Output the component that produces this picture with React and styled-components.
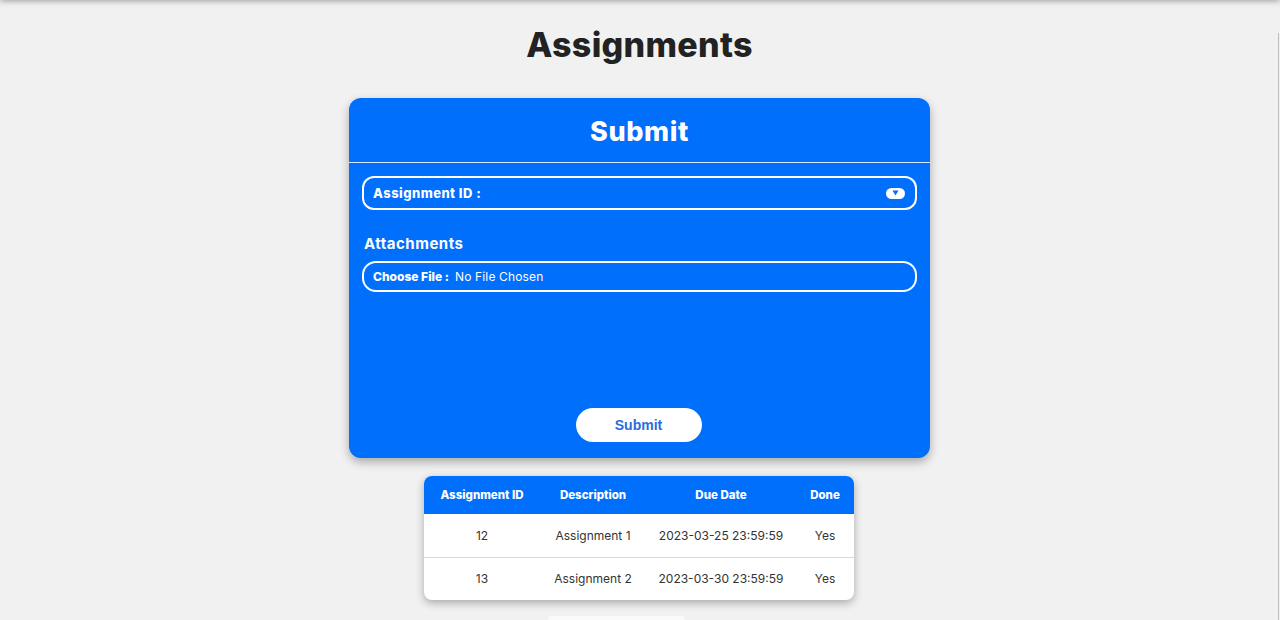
import React from "react";
import styled, { createGlobalStyle } from "styled-components";

const GlobalStyle = createGlobalStyle`
  * { box-sizing: border-box; }
  html, body { margin: 0; padding: 0; background: #f1f1f1; }
  body { font-family: Inter, "Open Sans", sans-serif; color: #222; overflow: hidden; }
`;

const BLUE = "#006ffb";

const Page = styled.div`
  position: relative;
  min-height: 620px;
  padding-right: 1px;
  display: flex;
  flex-direction: column;
  align-items: center;
`;

const TopShade = styled.div`
  position: absolute;
  top: -40px;
  left: 0;
  right: 0;
  height: 40px;
  background: #f1f1f1;
  box-shadow: 0 1px 6px rgba(0, 0, 0, 0.35);
`;

const SideEdge = styled.div`
  position: absolute;
  top: 33px;
  right: 1px;
  bottom: 0;
  width: 1px;
  background: #bdbdbd;
`;

const Title = styled.h1`
  margin: 24px 0 0;
  font-size: 34px;
  line-height: 42px;
  font-weight: 800;
  color: #222;
  letter-spacing: 0.3px;
`;

const Card = styled.form`
  margin-top: 32px;
  width: 581px;
  height: 360px;
  background: ${BLUE};
  border-radius: 12px;
  box-shadow: 0 4px 10px rgba(0, 0, 0, 0.3);
  display: flex;
  flex-direction: column;
  color: #fff;
`;

const CardHead = styled.div`
  height: 65px;
  padding-top: 2px;
  border-bottom: 1px solid rgba(255, 255, 255, 0.85);
  display: flex;
  align-items: center;
  justify-content: center;
  font-size: 27px;
  font-weight: 800;
  letter-spacing: 0.6px;
`;

const CardBody = styled.div`
  flex: 1;
  padding: 13px 13px 16px;
  display: flex;
  flex-direction: column;
`;

const Field = styled.div`
  height: ${(p) => p.$h}px;
  border: 2px solid #fff;
  border-radius: ${(p) => p.$r}px;
  display: flex;
  align-items: center;
  padding: 0 9px;
  gap: 6px;
  font-size: ${(p) => p.$fs}px;
`;

const Label = styled.span`
  font-weight: 800;
  letter-spacing: ${(p) => p.$ls || 0}px;
`;

const Value = styled.span`
  font-weight: 400;
  letter-spacing: 0.15px;
`;

const Spacer = styled.div`
  flex: 1;
`;

const ArrowPill = styled.span`
  width: 19px;
  height: 11px;
  border-radius: 6px;
  background: #fff;
  display: flex;
  align-items: center;
  justify-content: center;
  margin-right: 1px;
`;

const SectionTitle = styled.div`
  margin: 25px 0 8px 2px;
  font-size: 15px;
  font-weight: 700;
  line-height: 18px;
  letter-spacing: 0.5px;
`;

const SubmitRow = styled.div`
  margin-top: auto;
  display: flex;
  justify-content: center;
`;

const SubmitButton = styled.button`
  width: 126px;
  height: 34px;
  border: none;
  border-radius: 17px;
  background: #fff;
  color: #2a6ddb;
  font-family: "Liberation Sans", Arial, sans-serif;
  font-weight: 700;
  font-size: 14px;
  margin-right: 2px;
`;

const TableWrap = styled.div`
  margin-top: 18px;
  margin-right: 1px;
  width: 430px;
  border-radius: 8px;
  overflow: hidden;
  background: #fff;
  box-shadow: 0 3px 8px rgba(0, 0, 0, 0.3);
`;

const Table = styled.table`
  width: 100%;
  border-collapse: collapse;
  table-layout: fixed;
`;

const Th = styled.th`
  background: ${BLUE};
  color: #fff;
  height: 38px;
  font-size: 11.5px;
  font-weight: 800;
  text-align: center;
  padding: 0;
  width: ${(p) => p.$w}px;
`;

const Td = styled.td`
  height: 43px;
  text-align: center;
  font-size: 12px;
  color: #333;
  padding: 0;
  border-top: ${(p) => (p.$first ? "none" : "1px solid #d9d9d9")};
`;

const Footer = styled.div`
  margin-top: 16px;
  width: 137px;
  height: 30px;
  background: #fafafa;
  border-radius: 4px;
  margin-right: 46px;
`;

const rows = [
  { id: 12, desc: "Assignment 1", due: "2023-03-25 23:59:59", done: "Yes" },
  { id: 13, desc: "Assignment 2", due: "2023-03-30 23:59:59", done: "Yes" },
];

export default function App() {
  return (
    <>
      <GlobalStyle />
      <Page>
        <TopShade />
        <SideEdge />
        <Title>Assignments</Title>
        <Card onSubmit={(e) => e.preventDefault()}>
          <CardHead>Submit</CardHead>
          <CardBody>
            <Field $h={34} $r={12} $fs={13}>
              <Label $ls={0.45}>Assignment ID :</Label>
              <Spacer />
              <ArrowPill>
                <svg width="7" height="6" viewBox="0 0 7 6">
                  <path d="M0.5 0.5 L6.5 0.5 L3.5 5.5 Z" fill={BLUE} />
                </svg>
              </ArrowPill>
            </Field>
            <SectionTitle>Attachments</SectionTitle>
            <Field $h={31} $r={14} $fs={12}>
              <Label>Choose File :</Label>
              <Value>No File Chosen</Value>
            </Field>
            <SubmitRow>
              <SubmitButton type="submit">Submit</SubmitButton>
            </SubmitRow>
          </CardBody>
        </Card>
        <TableWrap>
          <Table>
            <thead>
              <tr>
                <Th $w={116}>Assignment ID</Th>
                <Th $w={106}>Description</Th>
                <Th $w={150}>Due Date</Th>
                <Th $w={58}>Done</Th>
              </tr>
            </thead>
            <tbody>
              {rows.map((r, i) => (
                <tr key={r.id}>
                  <Td $first={i === 0}>{r.id}</Td>
                  <Td $first={i === 0}>{r.desc}</Td>
                  <Td $first={i === 0}>{r.due}</Td>
                  <Td $first={i === 0}>{r.done}</Td>
                </tr>
              ))}
            </tbody>
          </Table>
        </TableWrap>
        <Footer />
      </Page>
    </>
  );
}
